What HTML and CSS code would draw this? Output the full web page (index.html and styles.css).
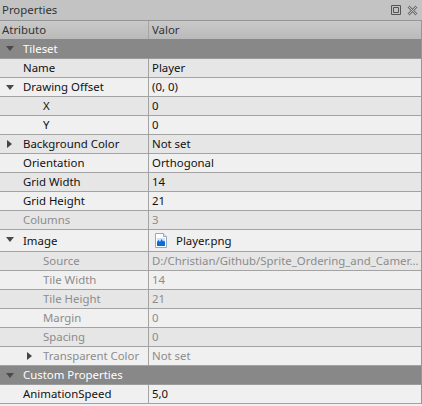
FILE: index.html
```html
<!DOCTYPE html>
<html lang="en">
<head>
    <meta charset="UTF-8">
    <meta name="viewport" content="width=device-width, initial-scale=1.0">
    <title>Properties</title>
    <link rel="stylesheet" href="styles.css">
</head>
<body>
    <div class="title-bar">
        <span>Properties</span>
        <div class="title-icons">
            <svg width="10" height="10" viewBox="0 0 10 10"><path d="M0.5 0.5h9v9h-9z M2.5 2.5h5v5h-5z" fill="none" stroke="#555"/></svg>
            <svg width="11" height="11" viewBox="0 0 11 11">
                <path d="M1.5 1.5l8 8M9.5 1.5l-8 8" fill="none" stroke="#6e6e6e" stroke-width="2.6"/>
                <path d="M1.5 1.5l8 8M9.5 1.5l-8 8" fill="none" stroke="#c8c8c8" stroke-width="1"/>
            </svg>
        </div>
    </div>

    <div class="prop-table">
        <div class="header-row">
            <div class="name-cell">Atributo</div>
            <div class="value-cell">Valor</div>
        </div>

        <div class="group-row first-group"><i class="arrow-down"></i>Tileset</div>

        <div class="row dark">
            <div class="name-cell level-1">Name</div>
            <div class="value-cell">Player</div>
        </div>
        <div class="row">
            <div class="name-cell level-1"><i class="arrow-down"></i>Drawing Offset</div>
            <div class="value-cell">(0, 0)</div>
        </div>
        <div class="row dark">
            <div class="name-cell level-2">X</div>
            <div class="value-cell">0</div>
        </div>
        <div class="row">
            <div class="name-cell level-2">Y</div>
            <div class="value-cell">0</div>
        </div>
        <div class="row dark">
            <div class="name-cell level-1"><i class="arrow-right"></i>Background Color</div>
            <div class="value-cell">Not set</div>
        </div>
        <div class="row">
            <div class="name-cell level-1">Orientation</div>
            <div class="value-cell">Orthogonal</div>
        </div>
        <div class="row dark">
            <div class="name-cell level-1">Grid Width</div>
            <div class="value-cell">14</div>
        </div>
        <div class="row">
            <div class="name-cell level-1">Grid Height</div>
            <div class="value-cell">21</div>
        </div>
        <div class="row dark disabled">
            <div class="name-cell level-1">Columns</div>
            <div class="value-cell">3</div>
        </div>
        <div class="row image-row">
            <div class="name-cell level-1"><i class="arrow-down"></i>Image</div>
            <div class="value-cell file-cell">
                <svg width="12" height="15" viewBox="0 0 12 15">
                    <path d="M0.5 0.5h8l3 3v11h-11z" fill="#fff" stroke="#9aa9bd"/>
                    <path d="M8.5 0.5v3h3" fill="#e4e9f0" stroke="#9aa9bd"/>
                    <path d="M2 5h8v8h-8z" fill="#cfe4fa"/>
                    <path d="M2 13v-4l1.5-2 1.5 2 1.5-3 1.5 2.5 1-1 1 1.5v4z" fill="#0c6bd6"/>
                </svg>
                <span>Player.png</span>
            </div>
        </div>
        <div class="row dark disabled">
            <div class="name-cell level-2">Source</div>
            <div class="value-cell">D:/Christian/Github/Sprite_Ordering_and_Camer...</div>
        </div>
        <div class="row disabled">
            <div class="name-cell level-2">Tile Width</div>
            <div class="value-cell">14</div>
        </div>
        <div class="row dark disabled">
            <div class="name-cell level-2">Tile Height</div>
            <div class="value-cell">21</div>
        </div>
        <div class="row disabled">
            <div class="name-cell level-2">Margin</div>
            <div class="value-cell">0</div>
        </div>
        <div class="row dark disabled">
            <div class="name-cell level-2">Spacing</div>
            <div class="value-cell">0</div>
        </div>
        <div class="row disabled">
            <div class="name-cell level-2"><i class="arrow-right"></i>Transparent Color</div>
            <div class="value-cell">Not set</div>
        </div>

        <div class="group-row"><i class="arrow-down"></i>Custom Properties</div>

        <div class="row">
            <div class="name-cell level-1">AnimationSpeed</div>
            <div class="value-cell">5,0</div>
        </div>
    </div>
</body>
</html>
```

FILE: styles.css
```css
body {
    margin: 0;
    height: 406px;
    overflow: hidden;
    background: #f0f0f0;
    color: #111;
    font-family: "Noto Sans", sans-serif;
    font-size: 11.4px;
    line-height: 18px;
}

.title-bar {
    display: flex;
    justify-content: space-between;
    align-items: center;
    height: 20px;
    padding: 0 2px;
    background: #c3c3c3;
    color: #333;
    border-bottom: 1px solid #969696;
}

.title-icons {
    display: flex;
    align-items: center;
    gap: 6px;
    padding-right: 2px;
}

.title-icons svg {
    display: block;
}

.prop-table {
    border-right: 1px solid #969696;
}

.header-row {
    display: grid;
    grid-template-columns: 149px 1fr;
    height: 18px;
    background: linear-gradient(#c9c9c9, #bababa);
    color: #333;
}

.header-row .name-cell {
    border-right: 1px solid #a6a6a6;
    padding-left: 2px;
}

.group-row {
    display: flex;
    align-items: center;
    height: 18px;
    padding-left: 23px;
    position: relative;
    background: #888888;
    color: #ffffff;
    border-bottom: 1px solid #9c9c9c;
}

.first-group {
    height: 19px;
}

.row {
    display: grid;
    grid-template-columns: 149px 1fr;
    height: 18px;
    background: #f0f0f0;
    border-bottom: 1px solid #a3a3a3;
}

.row.dark {
    background: #e6e6e6;
}

.row.disabled {
    color: #8c8c8c;
}

.image-row {
    height: 21px;
    line-height: 21px;
}

.name-cell {
    position: relative;
    white-space: nowrap;
}

.row .name-cell {
    border-right: 1px solid #a3a3a3;
}

.level-1 {
    padding-left: 23px;
}

.level-2 {
    padding-left: 43px;
}

.value-cell {
    padding-left: 3px;
    white-space: nowrap;
    overflow: hidden;
}

.file-cell {
    display: flex;
    align-items: center;
    gap: 9px;
    padding-left: 6px;
}

.file-cell svg {
    display: block;
}

/* tree arrows */
.arrow-down,
.arrow-right {
    position: absolute;
    width: 0;
    height: 0;
}

.arrow-down {
    left: 6px;
    top: 7px;
    border-left: 4px solid transparent;
    border-right: 4px solid transparent;
    border-top: 5px solid #4a4a4a;
}

.arrow-right {
    left: 7px;
    top: 5px;
    border-top: 4.5px solid transparent;
    border-bottom: 4.5px solid transparent;
    border-left: 5px solid #444;
}

.level-2 .arrow-right {
    left: 27px;
}
```
